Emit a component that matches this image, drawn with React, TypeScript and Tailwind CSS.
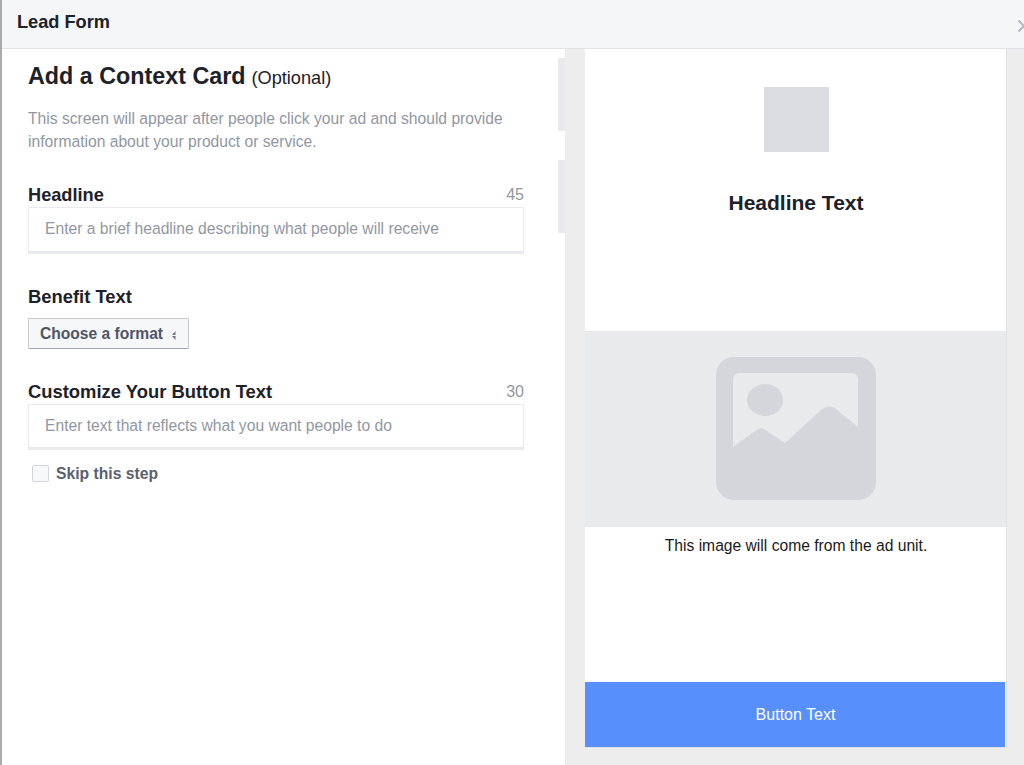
export default function App() {
  return (
    <div className="w-[1024px] h-[765px] overflow-hidden bg-white flex flex-col font-['Liberation_Sans',Arial,sans-serif] border-l-2 border-l-[#a9abb0]">
      <header className="h-[49px] shrink-0 bg-[#f5f6f8] border-b border-[#e1e3e8] flex items-center justify-between">
        <h1 className="ml-[15px] mb-[2px] text-[18.2px] font-bold text-[#1d2129]">Lead Form</h1>
        <svg width="6" height="12" viewBox="0 0 6 12" className="mb-[-4px]">
          <path d="M0.500 0.500 6 6M0.500 11.500 6 6" stroke="#b4b7bd" strokeWidth="2" fill="none" />
        </svg>
      </header>
      <div className="flex-1 flex min-h-0">
        <main className="w-[563px] shrink-0 flex">
          <div className="w-[556px] shrink-0 pl-[26px] pt-[12px]">
            <div className="w-[496px]">
              <h2 className="text-[#1d2129] leading-[30px]">
                <span className="text-[23.3px] font-bold">Add a Context Card</span>
                <span className="text-[18.2px] ml-[6px]">(Optional)</span>
              </h2>
              <p className="mt-[13px] text-[15.65px] leading-[23px] text-[#9197a3]">
                This screen will appear after people click your ad and should provide
                <br />
                information about your product or service.
              </p>
              <div className="mt-[32px] flex items-end justify-between h-[20px]">
                <label className="text-[18.2px] font-bold text-[#1d2129] leading-[20px]">Headline</label>
                <span className="text-[16px] text-[#9197a3] leading-[20px]">45</span>
              </div>
              <div className="mt-[2px] h-[47px] border border-[#e9eaed] border-b-[3px] flex items-center pl-[16px] pb-[2px] text-[15.65px] text-[#9197a3]">
                Enter a brief headline describing what people will receive
              </div>
              <label className="block mt-[33px] text-[18.4px] font-bold text-[#1d2129] leading-[20px]">Benefit Text</label>
              <button className="mt-[11px] w-[161px] h-[31px] flex items-center justify-between pl-[11px] pr-[11px] border border-[#c8cad0] border-b-[#a9adb5] rounded-[1px] bg-[#f6f7f9] text-[15.6px] font-bold text-[#4e5665]">
                Choose a format
                <svg width="5" height="9" viewBox="0 0 5 9" className="mt-[3px]">
                  <path d="M3.500 0 3.500 4H0zM0 5h3.500v4z" fill="#6a7180" />
                </svg>
              </button>
              <div className="mt-[33px] flex items-end justify-between h-[20px]">
                <label className="text-[18.4px] font-bold text-[#1d2129] leading-[20px]">Customize Your Button Text</label>
                <span className="text-[16px] text-[#9197a3] leading-[20px]">30</span>
              </div>
              <div className="mt-[2px] h-[46px] border border-[#e9eaed] border-b-[3px] flex items-center pl-[16px] text-[15.65px] text-[#9197a3]">
                Enter text that reflects what you want people to do
              </div>
              <label className="mt-[12px] ml-[4px] flex items-center gap-[7px] text-[15.7px] font-bold text-[#5b6170]">
                <span className="w-[17px] h-[17px] rounded-[2px] border border-[#d3d5da] bg-[#f7f8fa]" />
                Skip this step
              </label>
            </div>
          </div>
          <div className="w-[7px] shrink-0 pt-[9px] flex flex-col gap-[29px]">
            <div className="h-[73px] bg-[#e9eaed]" />
            <div className="h-[73px] bg-[#e9eaed]" />
          </div>
        </main>
        <aside className="flex-1 bg-[#ededed] pl-[20px] pr-[17px] pb-[17px] flex">
          <div className="flex-1 bg-white border-r border-b border-[#dfe1e6] flex flex-col">
            <div className="h-[282px] shrink-0 flex flex-col items-center pt-[38px] pl-[1px]">
              <div className="w-[65px] h-[65px] bg-[#dcdde2]" />
              <h3 className="mt-[39px] text-[21px] font-bold text-[#1d2129] leading-[24px]">Headline Text</h3>
            </div>
            <div className="h-[196px] shrink-0 bg-[#e9eaec] flex items-center justify-center pl-[1px] pb-[1px]">
              <svg width="160" height="143" viewBox="0 0 160 143">
                <path
                  fillRule="evenodd"
                  fill="#d4d6db"
                  d="M18 0H142A18 18 0 0 1 160 18V125A18 18 0 0 1 142 143H18A18 18 0 0 1 0 125V18A18 18 0 0 1 18 0ZM23 16A6 6 0 0 0 17 22V90L42 72Q45 70.500 48 72L69 86 106 52Q114 47 120 52L142 70V22A6 6 0 0 0 136 16Z"
                />
                <ellipse cx="49" cy="43" rx="18" ry="16" fill="#d4d6db" />
              </svg>
            </div>
            <p className="mt-[10px] pl-[1px] text-center text-[15.65px] leading-[18px] text-[#1a1a1a]">This image will come from the ad unit.</p>
            <div className="flex-1" />
            <div className="h-[65px] shrink-0 mr-[1px] pl-[1px] bg-[#578ffd] flex items-center justify-center text-[16px] text-white">Button Text</div>
          </div>
        </aside>
      </div>
    </div>
  );
}
